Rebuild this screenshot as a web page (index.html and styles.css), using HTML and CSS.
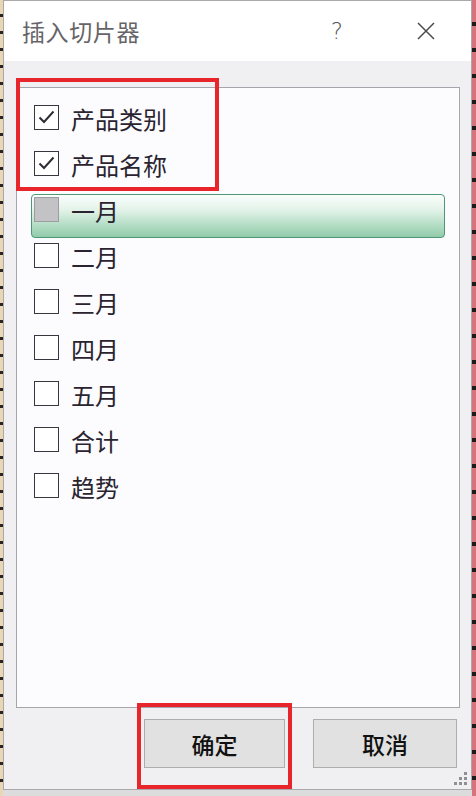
FILE: index.html
```html
<!DOCTYPE html>
<html lang="zh-CN">
  <head>
    <meta charset="UTF-8" />
    <meta name="viewport" content="width=device-width, initial-scale=1.0" />
    <title>插入切片器</title>

    <link rel="stylesheet" href="styles.css">
  </head>
  <body>
    <div class="sheet-left"></div>

    <div class="dialog">
      <!-- Title bar -->
      <div class="titlebar">
        <span class="title">插入切片器</span>
        <span class="help">?</span>
        <svg class="close" width="18" height="18" viewBox="0 0 18 18">
          <path d="M1 1 L17 17 M17 1 L1 17" stroke="#4a4a4a" stroke-width="1.5" fill="none" />
        </svg>
      </div>

      <!-- Field list -->
      <div class="body">
        <div class="field-list">
          <div class="field">
            <span class="box checked">
              <svg width="25" height="25" viewBox="0 0 25 25"><path d="M5.5 12.5 L10 17 L19.5 6.5" stroke="#2e2b33" stroke-width="2" fill="none" /></svg>
            </span>
            <span class="label">产品类别</span>
          </div>
          <div class="field">
            <span class="box checked">
              <svg width="25" height="25" viewBox="0 0 25 25"><path d="M5.5 12.5 L10 17 L19.5 6.5" stroke="#2e2b33" stroke-width="2" fill="none" /></svg>
            </span>
            <span class="label">产品名称</span>
          </div>
          <div class="field focused">
            <span class="box grey"></span>
            <span class="label">一月</span>
          </div>
          <div class="field"><span class="box"></span><span class="label">二月</span></div>
          <div class="field"><span class="box"></span><span class="label">三月</span></div>
          <div class="field"><span class="box"></span><span class="label">四月</span></div>
          <div class="field"><span class="box"></span><span class="label">五月</span></div>
          <div class="field"><span class="box"></span><span class="label">合计</span></div>
          <div class="field"><span class="box"></span><span class="label">趋势</span></div>
        </div>

        <div class="buttons">
          <button class="btn ok">确定</button>
          <button class="btn cancel">取消</button>
        </div>
      </div>

      <div class="grip">
        <i style="left: 10px; top: 0"></i>
        <i style="left: 5px; top: 5px"></i>
        <i style="left: 10px; top: 5px"></i>
        <i style="left: 0; top: 10px"></i>
        <i style="left: 5px; top: 10px"></i>
        <i style="left: 10px; top: 10px"></i>
      </div>

      <!-- Red highlight marks -->
      <div class="mark mark-fields"></div>
      <div class="mark mark-ok"></div>
    </div>

    <div class="sheet-right"></div>
  </body>
</html>
```

FILE: styles.css
```css
/* General */
body {
  margin: 0;
  width: 476px;
  height: 796px;
  overflow: hidden;
  display: flex;
  background: #dcdcdc;
  font-family: "Noto Sans CJK SC", "Noto Sans", sans-serif;
}

/* Spreadsheet peeking out at the sides */
.sheet-left {
  width: 3px;
  height: 796px;
  background: repeating-linear-gradient(
    to bottom,
    #e9d7b4 0px,
    #e9d7b4 14px,
    #2a2420 14px,
    #2a2420 17px
  );
}

.sheet-right {
  width: 4px;
  height: 796px;
  background: repeating-linear-gradient(
    to bottom,
    #d9737b 0px,
    #d9737b 22px,
    #1e1a1a 22px,
    #1e1a1a 26px
  );
}

/* Dialog */
.dialog {
  position: relative;
  width: 467px;
  height: 788px;
  border: 1px solid #a9a9ad;
  background: #f0f0f2;
  display: flex;
  flex-direction: column;
}

.titlebar {
  height: 60px;
  flex: none;
  background: #ffffff;
  display: flex;
  align-items: center;
}

.title {
  padding-left: 18px;
  font-size: 23px;
  color: #666468;
  letter-spacing: 0.6px;
}

.help {
  margin-left: auto;
  margin-right: 74px;
  font-family: "DejaVu Sans", sans-serif;
  font-size: 23px;
  font-weight: 300;
  color: #555;
}

.close {
  margin-right: 36px;
}

.body {
  flex: 1;
  padding: 26px 11px 0 12px;
}

/* List box */
.field-list {
  height: 621px;
  box-sizing: border-box;
  border: 1px solid #a6a5ad;
  background: #fcfcfe;
  padding: 14px 14px 0 14px;
  display: flex;
  flex-direction: column;
  gap: 2px;
}

.field {
  height: 44px;
  box-sizing: border-box;
  border: 1px solid transparent;
  border-radius: 4px;
  padding: 2px 0 0 2px;
  display: flex;
  align-items: flex-start;
}

.field.focused {
  border-color: #4e9877;
  background: linear-gradient(to bottom, #fbfefc 0%, #e3f3e9 35%, #a9d8bd 80%, #93cbab 100%);
}

.box {
  width: 25px;
  height: 25px;
  flex: none;
  box-sizing: border-box;
  border: 1.5px solid #3a3640;
  background: #ffffff;
  display: flex;
}

.box svg {
  margin: -1.5px;
}

.box.grey {
  background: #c3c3c5;
  border-color: #9d9ca2;
}

.label {
  margin-left: 12px;
  font-size: 24px;
  line-height: 28px;
  color: #2a2430;
}

/* Buttons */
.buttons {
  display: flex;
  justify-content: flex-end;
  gap: 28px;
  margin-top: 11px;
  padding-right: 3px;
}

.btn {
  height: 49px;
  border: 1px solid #adadad;
  background: #e1e1e1;
  font-family: "Noto Sans CJK SC", sans-serif;
  font-size: 23px;
  font-weight: 500;
  color: #111;
  padding: 0;
}

.btn.ok {
  width: 141px;
}

.btn.cancel {
  width: 144px;
}

/* Resize grip */
.grip {
  position: absolute;
  right: 4px;
  bottom: 4px;
  width: 13px;
  height: 13px;
}

.grip i {
  position: absolute;
  width: 3px;
  height: 3px;
  background: #8f8f96;
}

/* Red marks */
.mark {
  position: absolute;
  border: 4px solid #e8252b;
  box-sizing: border-box;
}

.mark-fields {
  left: 12px;
  top: 77px;
  width: 203px;
  height: 113px;
}

.mark-ok {
  left: 133px;
  top: 702px;
  width: 155px;
  height: 86px;
}
```
